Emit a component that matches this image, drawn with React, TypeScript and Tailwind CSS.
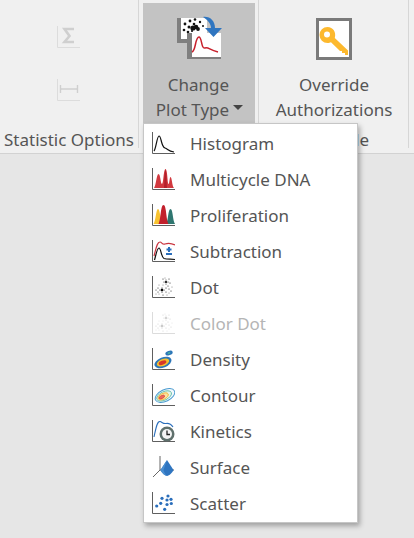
const font = "font-['Noto_Sans','Open_Sans',sans-serif]";

// axis used by most of the plot icons
const Axis = ({ color = "#5f5f5f" }: { color?: string }) => (
  <path d="M1.500 1v21.500H24" fill="none" stroke={color} strokeWidth="1" />
);

const dots: [number, number, number][] = [
  [15, 7, 1.100], [13, 7, 0.5], [17, 7, 0.5], [15, 5, 0.5], [15, 9, 0.5], [12, 4, 0.5], [18, 4, 0.5], [14, 3, 0.4], [19, 8, 0.5], [12, 10, 0.4], [17, 11, 0.5],
  [11, 15, 1.200], [9, 15, 0.6], [13, 15, 0.6], [11, 13, 0.6], [11, 17, 0.6], [7, 13, 0.5], [5, 15, 0.5], [7, 17, 0.5], [15, 13, 0.5],
  [15, 17, 0.5], [18, 14, 0.5], [20, 16, 0.5], [5, 19, 0.4], [12, 20, 0.5], [16, 20, 0.4], [8, 10, 0.4], [21, 12, 0.4], [18, 18, 0.4], [8, 19, 0.4],
];

const HistogramIcon = () => (
  <svg width="24" height="24" viewBox="0 0 24 24">
    <Axis />
    <path d="M3 20C5 18 6 5 8 5C10.500 5 10 16 14 17C17 18 17 20 23 21" fill="none" stroke="#111" strokeWidth="1.200" />
  </svg>
);
const MulticycleIcon = () => (
  <svg width="24" height="24" viewBox="0 0 24 24">
    <Axis />
    <path d="M3 21C5 19 5.500 7 7.500 7C9.500 7 9.500 17 11 17C12.500 17 12.500 2 14.500 2C16.500 2 16.500 17 17.500 17C18.500 17 18.500 10 19.500 10C21 10 21 19 23 21Z" fill="#d2393f" />
    <path d="M14.500 2C13 8 13.500 17 13 21H16C15.500 17 16 8 14.500 2Z" fill="#b3202b" />
  </svg>
);
const ProliferationIcon = () => (
  <svg width="24" height="24" viewBox="0 0 24 24">
    <Axis />
    <path d="M2.500 21C5 17 5 6 7 6C9 6 9.500 17 11 21Z" fill="#f8c22f" />
    <path d="M15 21C17.500 17 17 6 19.500 6C22 6 21.500 17 24 21Z" fill="#2f7670" />
    <path d="M7.500 21C10 16 9.500 2 12.500 2C15.500 2 15 16 17.500 21Z" fill="#c2202c" />
  </svg>
);
const SubtractionIcon = () => (
  <svg width="24" height="24" viewBox="0 0 24 24">
    <Axis />
    <path d="M3 17C5 10 6 3 9 3C11 3 11 6 14 5C17 4 20 4 24 6" fill="none" stroke="#c9343f" strokeWidth="1.200" />
    <path d="M3.500 21C5 16 6 9 8 9C10 9 10 18 13 19.500C16 20.500 20 20 24 20.500" fill="none" stroke="#111" strokeWidth="1.200" />
    <path d="M18 8v5M15.500 10.500h5M15 15h6" fill="none" stroke="#2a6ebb" strokeWidth="2" />
  </svg>
);
const DotIcon = ({ fill = "#000", axis }: { fill?: string; axis?: string }) => (
  <svg width="24" height="24" viewBox="0 0 24 24">
    <Axis color={axis} />
    {dots.map(([x, y, r], i) => (
      <circle key={i} cx={x} cy={y} r={r} fill={fill} />
    ))}
  </svg>
);
const DensityIcon = () => (
  <svg width="24" height="24" viewBox="0 0 24 24">
    <Axis />
    <g transform="rotate(-22 12 15.500)">
      <ellipse cx="12" cy="15.500" rx="9" ry="5" fill="#2d76b8" />
      <ellipse cx="12" cy="15.500" rx="6.500" ry="3.400" fill="#f4c031" />
      <ellipse cx="11.500" cy="15.500" rx="4" ry="2" fill="#d8362b" />
    </g>
    <ellipse cx="18" cy="6" rx="3.800" ry="2.200" fill="#2d76b8" transform="rotate(-20 18 6)" />
    <ellipse cx="18" cy="6" rx="1.500" ry="0.800" fill="#4bb3a0" transform="rotate(-20 18 6)" />
  </svg>
);
const ContourIcon = () => (
  <svg width="24" height="24" viewBox="0 0 24 24">
    <Axis />
    <g transform="rotate(-26 14 12.500)">
      <ellipse cx="14" cy="12.500" rx="10.500" ry="5.800" fill="#f2f8fc" stroke="#4a9bd0" strokeWidth="1" />
      <ellipse cx="13" cy="12.500" rx="8" ry="4.200" fill="#e8f4e4" stroke="#58b8a6" strokeWidth="0.800" />
      <ellipse cx="12" cy="12.500" rx="5.500" ry="2.900" fill="#fbe3a0" stroke="#f0b030" strokeWidth="0.800" />
      <ellipse cx="10.500" cy="12.500" rx="3" ry="1.500" fill="#ea6a60" stroke="#d8362b" strokeWidth="0.600" />
    </g>
  </svg>
);
const KineticsIcon = () => (
  <svg width="24" height="24" viewBox="0 0 24 24">
    <Axis />
    <path d="M3 18C5 9 6 2 9 2.500C11 3 12 5 15 4.500C18 4 20 5 22 8" fill="none" stroke="#2a6ebb" strokeWidth="1.100" />
    <circle cx="16" cy="15" r="7.500" fill="#5f706c" />
    <circle cx="16" cy="15" r="5" fill="#f4f4f4" />
    <path d="M16 11.500v4h3" fill="none" stroke="#222" strokeWidth="1.300" />
  </svg>
);
const SurfaceIcon = () => (
  <svg width="24" height="24" viewBox="0 0 24 24">
    <path d="M9 15V1M9 15L2 22M9 15H23" fill="none" stroke="#666" strokeWidth="1" />
    <path d="M16 5L22.500 15C22 17 18 21 16 21C14 21 10 17 9.500 15Z" fill="#2f75c0" />
    <path d="M16 5L12.500 15C13 17 15 20.500 16 21C14 21 10 17 9.500 15Z" fill="#4a8fd2" />
  </svg>
);
const ScatterIcon = () => (
  <svg width="24" height="24" viewBox="0 0 24 24">
    <Axis />
    {[[17, 5], [20, 8.300], [11, 7.300], [16, 9], [5.700, 15], [9.700, 12.300], [13.700, 18.300], [20.300, 12.500], [16, 13.500]].map(([x, y], i) => (
      <circle key={i} cx={x} cy={y} r="1.600" fill="#2a6ebb" />
    ))}
  </svg>
);

const ChangePlotIcon = () => (
  <svg width="46" height="46" viewBox="0 0 46 46">
    <path d="M1 2H24V27H1Z" fill="#7f7f7f" />
    <path d="M5 2H31V23H5Z" fill="#fff" />
    {[[9, 8, 1.400], [14, 5, 1.400], [19, 3.500, 1.300], [24, 6, 1.200], [8, 14, 1.300], [13, 11, 1.500], [12, 16, 1.300], [18, 8, 1.300], [17, 12, 2.600], [20, 11, 2.300], [22, 13, 1.900], [16, 15, 1.100], [27, 10, 1]].map(([x, y, r], i) => (
      <circle key={i} cx={x} cy={y} r={r} fill="#111" />
    ))}
    <path d="M11 17H45V43H11Z" fill="#7f7f7f" />
    <path d="M16 17H45V41H16Z" fill="#fff" />
    <path d="M16 36C20 35 19 21 23 21C26 21 25 33 29 32C33 31 33 34 42 36" fill="none" stroke="#c8202c" strokeWidth="1.500" />
    <path d="M27 1C34 0 39 5 39 12H46L37.500 21L29 12H35C35 8 32 4 27 1Z" fill="#2f75c0" />
  </svg>
);

const KeyIcon = () => (
  <svg width="36" height="42" viewBox="0 0 36 42">
    <path d="M1.500 1.500H34.500V40.500H1.500Z" fill="#fff" stroke="#7a7a7a" strokeWidth="3" />
    <path d="M11.500 9A8 8 0 0 0 11.500 25C13 25 14 24.700 15 24.200L24 33H26V35H29V37H32V32.500L18.800 20C20.500 14 17 9 11.500 9ZM11 13.500A3 3 0 1 1 11 19.500A3 3 0 1 1 11 13.500Z" fill="#fdb92e" fillRule="evenodd" />
  </svg>
);

const SigmaIcon = () => (
  <svg width="24" height="24" viewBox="0 0 24 24">
    <path d="M0.500 0V21.500H23" fill="none" stroke="#dcdcdc" strokeWidth="1" />
    <path d="M17 3H7.500L12.500 10L7.500 16H17" fill="none" stroke="#cfcfcf" strokeWidth="2.600" />
  </svg>
);
const RangeIcon = () => (
  <svg width="24" height="24" viewBox="0 0 24 24">
    <path d="M0.500 0V21.500H23" fill="none" stroke="#dcdcdc" strokeWidth="1" />
    <path d="M3.500 6V14M20.500 6V14M3.500 10H20.500" fill="none" stroke="#cfcfcf" strokeWidth="1.400" />
  </svg>
);

const items = [
  { label: "Histogram", icon: <HistogramIcon /> },
  { label: "Multicycle DNA", icon: <MulticycleIcon /> },
  { label: "Proliferation", icon: <ProliferationIcon /> },
  { label: "Subtraction", icon: <SubtractionIcon /> },
  { label: "Dot", icon: <DotIcon /> },
  { label: "Color Dot", icon: <DotIcon fill="#c9c9c9" axis="#dcdcdc" />, disabled: true },
  { label: "Density", icon: <DensityIcon /> },
  { label: "Contour", icon: <ContourIcon /> },
  { label: "Kinetics", icon: <KineticsIcon /> },
  { label: "Surface", icon: <SurfaceIcon /> },
  { label: "Scatter", icon: <ScatterIcon /> },
];

export default function App() {
  return (
    <div className={`relative h-[538px] w-[414px] overflow-hidden bg-[#e6e6e6] text-[17px] leading-[25px] text-[#555] ${font}`}>
      {/* ribbon */}
      <div className="flex h-[154px] border-b border-[#d2d2d2] bg-[#f0f0f0] pb-[5px]">
        <div className="flex w-[139px] shrink-0 flex-col items-center border-r border-[#d6d6d6]">
          <div className="flex flex-1 flex-col items-center gap-[29px] pt-[26px]">
            <SigmaIcon />
            <RangeIcon />
          </div>
          <div className="whitespace-nowrap leading-[16px]">Statistic Options</div>
        </div>

        <div className="flex w-[120px] shrink-0 justify-center border-r border-[#d6d6d6] pt-[3px]">
          <div className="flex h-[120px] w-[112px] flex-col items-center bg-[#c3c3c3] pt-[13px]">
            <ChangePlotIcon />
            <div className="mt-[10px] text-center">Change</div>
            <div className="flex items-center gap-[4px] pl-[2px]">
              Plot Type
              <span className="mt-[-4px] h-0 w-0 border-x-[5px] border-t-[5px] border-x-transparent border-t-[#444]" />
            </div>
          </div>
        </div>

        <div className="flex w-[150px] shrink-0 flex-col items-center border-r border-[#d6d6d6] pl-[1px] pt-[18px]">
          <KeyIcon />
          <div className="mt-[12px] text-center">Override</div>
          <div>Authorizations</div>
          <div className="mt-auto leading-[16px]">Override</div>
        </div>
      </div>

      {/* plot type menu */}
      <div className="absolute left-[143px] top-[123px] w-[215px] border border-[#c6c6c6] bg-white pt-[1px] pb-[1px] shadow-[2px_3px_5px_rgba(0,0,0,0.3)]">
        {items.map((item) => (
          <div key={item.label} className="flex h-[36px] items-center">
            <div className="ml-[7px] mt-[-1px] flex w-[39px] shrink-0">{item.icon}</div>
            <span className={item.disabled ? "text-[#b5b5b5]" : ""}>{item.label}</span>
          </div>
        ))}
      </div>
    </div>
  );
}
